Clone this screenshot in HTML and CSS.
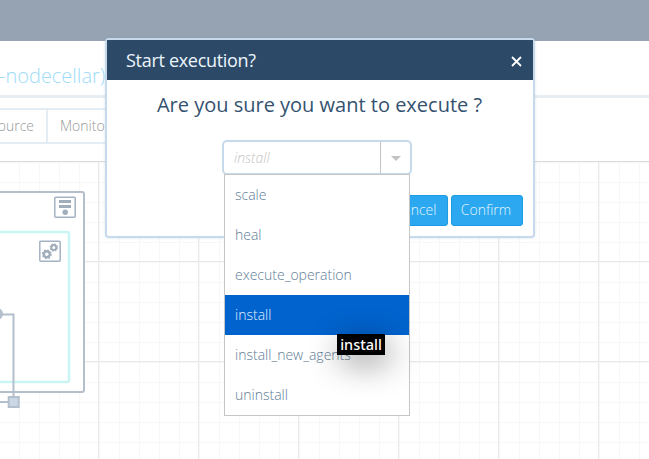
FILE: index.html
```html
<!DOCTYPE html>
<html lang="en">
<head>
<meta charset="utf-8">
<title>Start execution</title>
<link rel="stylesheet" href="styles.css">
</head>
<body>
<div class="page">
  <header class="topbar"></header>
  <div class="title-row"><h1 class="title">-nodecellar)</h1></div>
  <nav class="tabs">
    <span class="tab tab-source">Source</span>
    <span class="tab tab-monitor">Monitoring</span>
  </nav>
  <main class="canvas">
    <svg class="topology" width="110" height="298" viewBox="0 161 110 298">
      <rect x="-20" y="192" width="104" height="200" rx="2" fill="#fff" stroke="#b3bfcb" stroke-width="2"/>
      <rect x="-20" y="232" width="89" height="150" rx="2" fill="#fff" stroke="#c9f5f4" stroke-width="2.6"/>
      <g fill="#fff" stroke="#a5b2c3" stroke-width="1.5">
        <rect x="54.8" y="197.3" width="20.4" height="20" rx="1"/>
        <rect x="39.8" y="241.3" width="20.4" height="20" rx="1"/>
      </g>
      <g fill="#a0adba">
        <rect x="59" y="200" width="12" height="3"/>
        <rect x="59" y="205" width="12" height="3"/>
        <circle cx="65.2" cy="212.3" r="2.7"/>
      </g>
      <g fill="none" stroke="#a0adba">
        <circle cx="46.8" cy="254.3" r="3" stroke-width="2.4"/>
        <circle cx="46.8" cy="254.3" r="4.3" stroke-width="1.3" stroke-dasharray="1.7 1.677"/>
        <circle cx="53.8" cy="247.5" r="2.5" stroke-width="2"/>
        <circle cx="53.8" cy="247.5" r="3.6" stroke-width="1.2" stroke-dasharray="1.4 1.427"/>
      </g>
      <g fill="none" stroke="#b3bfcb" stroke-width="2">
        <path d="M0 314.5H13.5V397M0 402H9"/>
        <rect x="8.7" y="397" width="10" height="10" fill="#cbd7e5"/>
      </g>
      <circle cx="-3" cy="314" r="6" fill="#b3bfcb"/>
    </svg>
  </main>
</div>

<section class="modal">
  <header class="modal-head">
    <h2 class="modal-title">Start execution?</h2>
    <svg class="close" width="11" height="11" viewBox="0 0 11 11"><path d="M1 1L10 10M10 1L1 10"/></svg>
  </header>
  <div class="modal-body">
    <p class="question">Are you sure you want to execute ?</p>
    <div class="select">
      <div class="select-box">
        <span class="placeholder">install</span>
        <span class="toggle"><i class="caret"></i></span>
      </div>
      <ul class="menu">
        <li>scale</li>
        <li>heal</li>
        <li>execute_operation</li>
        <li class="active">install</li>
        <li>install_new_agents</li>
        <li>uninstall</li>
      </ul>
    </div>
    <div class="actions">
      <button class="btn btn-cancel">Cancel</button>
      <button class="btn">Confirm</button>
    </div>
  </div>
</section>
<div class="tooltip">install</div>
</body>
</html>
```
FILE: styles.css
```css
* { box-sizing: border-box; }
body {
  margin: 0;
  width: 649px;
  height: 459px;
  overflow: hidden;
  background: #fff;
  font-family: "Open Sans", "Noto Sans", sans-serif;
  font-weight: 300;
}
.page { display: flex; flex-direction: column; height: 459px; }
.topbar { flex: none; height: 41px; background: #95a3b3; }
.title-row { flex: none; height: 57px; padding-top: 21px; border-bottom: 3px solid #e7edf1; }
.title { margin: 0 0 0 -1px; font-size: 20px; line-height: 27px; font-weight: 300; color: #9edcf8; }
.tabs {
  flex: none;
  display: flex;
  width: 300px;
  height: 36px;
  margin: 10px 0 17px;
  border: solid #e4ecf4;
  border-width: 2px 0;
}
.tab { font-size: 14px; line-height: 32px; color: #999; }
.tab-source { width: 48px; padding-right: 12px; border-right: 2px solid #e4ecf4; display: flex; justify-content: flex-end; }
.tab-monitor { padding-left: 12px; }
.canvas {
  flex: 1;
  border-top: 1px solid #d9dbdd;
  background:
    linear-gradient(90deg, #e8e9ea 1px, transparent 1px) -2px 0 / 100px 100px,
    linear-gradient(#e8e9ea 1px, transparent 1px) 0 -1px / 100px 100px,
    linear-gradient(90deg, #f7f7f8 1px, transparent 1px) -1px 0 / 20px 20px,
    linear-gradient(#f7f7f8 1px, transparent 1px) 0 0 / 20px 20px;
}
.topology { display: block; margin-top: -1px; }
.modal {
  position: absolute;
  left: 105px;
  top: 38px;
  width: 430px;
  height: 200px;
  border: 2px solid #c7daeb;
  border-radius: 4px;
  background: #fff;
  box-shadow: 0 0 3px rgba(120, 150, 180, .25);
}
.modal-head {
  display: flex;
  align-items: center;
  justify-content: space-between;
  height: 40px;
  padding: 0 11px 0 19px;
  background: #2c4a68;
}
.modal-title { margin: 0; font-size: 18px; line-height: 40px; font-weight: 400; letter-spacing: -.3px; color: #edf5fc; }
.close { margin-top: 3px; fill: none; stroke: #fff; stroke-width: 1.8; }
.modal-body { display: flex; flex-direction: column; height: 156px; padding: 10px; }
.question { margin: 0 1px 0 0; font-size: 20px; line-height: 30px; font-weight: 400; color: #34526f; text-align: center; }
.select { position: relative; width: 190px; margin: 20px 0 0 105px; }
.select-box { display: flex; height: 35px; border: 2px solid #c7daeb; border-radius: 5px; }
.placeholder { flex: 1; padding-left: 10px; font-size: 14px; line-height: 31px; font-style: italic; color: #c6c6c6; }
.toggle { display: flex; align-items: center; justify-content: center; width: 30px; border-left: 1px solid #c3c3c3; }
.caret { margin-top: 2px; border: 5px solid transparent; border-top-color: #c3c3c3; border-bottom: 0; }
.menu {
  position: absolute;
  z-index: 2;
  left: 2px;
  top: 34px;
  width: 186px;
  margin: 0;
  padding: 0;
  list-style: none;
  background: #fff;
  border: 1px solid #c5c5c5;
}
.menu li { height: 40px; padding-left: 10px; font-size: 14px; line-height: 39px; color: #617d98; }
.menu .active { background: #0063ce; color: #e4f1ff; }
.actions { display: flex; justify-content: flex-end; gap: 3px; margin-top: auto; }
.btn {
  width: 72px;
  height: 31px;
  padding: 0 2px 2px 0;
  border: 1px solid #1e9be6;
  border-radius: 3px;
  background: #2ba8ef;
  color: #e4f5ff;
  font: 300 14px/27px "Open Sans", "Noto Sans", sans-serif;
}
.btn-cancel { width: 65px; padding-right: 0; }
.tooltip {
  position: absolute;
  z-index: 3;
  left: 337px;
  top: 334px;
  width: 48px;
  height: 21px;
  background: #000;
  color: #fff;
  font: 500 14.5px/21px "Noto Sans", sans-serif;
  text-align: center;
  box-shadow: 4px 8px 32px rgba(0, 0, 0, .45);
}
```
